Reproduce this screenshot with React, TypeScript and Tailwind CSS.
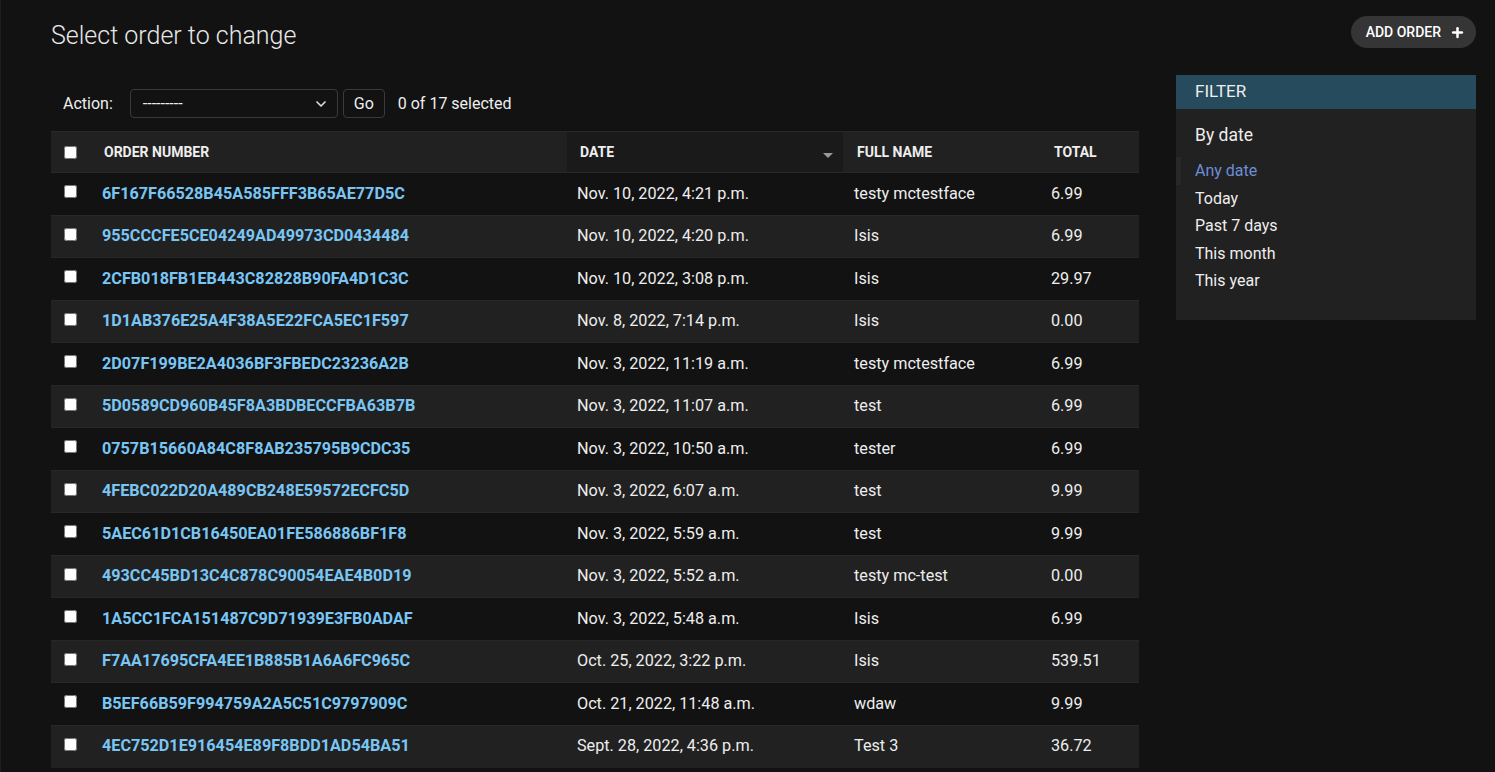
import { ChevronDown, Plus } from 'lucide-react';

interface Order {
  number: string;
  date: string;
  name: string;
  total: string;
}

const orders: Order[] = [
  { number: '6F167F66528B45A585FFF3B65AE77D5C', date: 'Nov. 10, 2022, 4:21 p.m.', name: 'testy mctestface', total: '6.99' },
  { number: '955CCCFE5CE04249AD49973CD0434484', date: 'Nov. 10, 2022, 4:20 p.m.', name: 'Isis', total: '6.99' },
  { number: '2CFB018FB1EB443C82828B90FA4D1C3C', date: 'Nov. 10, 2022, 3:08 p.m.', name: 'Isis', total: '29.97' },
  { number: '1D1AB376E25A4F38A5E22FCA5EC1F597', date: 'Nov. 8, 2022, 7:14 p.m.', name: 'Isis', total: '0.00' },
  { number: '2D07F199BE2A4036BF3FBEDC23236A2B', date: 'Nov. 3, 2022, 11:19 a.m.', name: 'testy mctestface', total: '6.99' },
  { number: '5D0589CD960B45F8A3BDBECCFBA63B7B', date: 'Nov. 3, 2022, 11:07 a.m.', name: 'test', total: '6.99' },
  { number: '0757B15660A84C8F8AB235795B9CDC35', date: 'Nov. 3, 2022, 10:50 a.m.', name: 'tester', total: '6.99' },
  { number: '4FEBC022D20A489CB248E59572ECFC5D', date: 'Nov. 3, 2022, 6:07 a.m.', name: 'test', total: '9.99' },
  { number: '5AEC61D1CB16450EA01FE586886BF1F8', date: 'Nov. 3, 2022, 5:59 a.m.', name: 'test', total: '9.99' },
  { number: '493CC45BD13C4C878C90054EAE4B0D19', date: 'Nov. 3, 2022, 5:52 a.m.', name: 'testy mc-test', total: '0.00' },
  { number: '1A5CC1FCA151487C9D71939E3FB0ADAF', date: 'Nov. 3, 2022, 5:48 a.m.', name: 'Isis', total: '6.99' },
  { number: 'F7AA17695CFA4EE1B885B1A6A6FC965C', date: 'Oct. 25, 2022, 3:22 p.m.', name: 'Isis', total: '539.51' },
  { number: 'B5EF66B59F994759A2A5C51C9797909C', date: 'Oct. 21, 2022, 11:48 a.m.', name: 'wdaw', total: '9.99' },
  { number: '4EC752D1E916454E89F8BDD1AD54BA51', date: 'Sept. 28, 2022, 4:36 p.m.', name: 'Test 3', total: '36.72' },
];

const dateFilters = ['Any date', 'Today', 'Past 7 days', 'This month', 'This year'];

function ActionBar() {
  return (
    <div className="flex items-center h-[29px] pl-3 text-[16px] text-[#eeeeee]">
      <span>Action:</span>
      <div className="ml-[17px] flex items-center justify-between w-[208px] h-[29px] border border-[#3a3a3a] rounded-[4px] pl-3 pr-2 text-[16px]">
        <span>---------</span>
        <ChevronDown size={16} strokeWidth={2.5} className="text-[#dddddd]" />
      </div>
      <button className="ml-[5px] w-[42px] h-[29px] border border-[#3a3a3a] rounded-[4px] text-[16px]">Go</button>
      <span className="ml-[13px]">0 of 17 selected</span>
    </div>
  );
}

function OrderTable() {
  return (
    <table className="w-[1088px] table-fixed border-collapse mt-[13px]">
      <colgroup>
        <col className="w-[39px]" />
        <col className="w-[477px]" />
        <col className="w-[276px]" />
        <col className="w-[197px]" />
        <col className="w-[99px]" />
      </colgroup>
      <thead>
        <tr className="h-[41px] text-left text-[14px] font-bold uppercase text-[#eeeeee] border-t border-[#272727]">
          <th className="bg-[#212121] pl-[13px]">
            <input type="checkbox" className="block w-[13px] h-[13px]" />
          </th>
          <th className="bg-[#212121] pl-[14px]">Order number</th>
          <th className="bg-[#1a1a1a] pl-[13px]">
            <div className="flex items-center justify-between pr-[10px]">
              <span>Date</span>
              <span className="w-0 h-0 border-l-[5px] border-r-[5px] border-t-[5px] border-l-transparent border-r-transparent border-t-[#999999] mt-[6px]" />
            </div>
          </th>
          <th className="bg-[#212121] pl-[14px]">Full name</th>
          <th className="bg-[#212121] pl-[14px]">Total</th>
        </tr>
      </thead>
      <tbody>
        {orders.map((order, i) => (
          <tr
            key={order.number}
            className={`h-[42.5px] text-[16.2px] text-[#eeeeee] border-t border-[#272727] ${i % 2 === 1 ? 'bg-[#212121]' : 'bg-[#121212]'}`}
          >
            <td className="pl-[13px]">
              <input type="checkbox" className="block w-[13px] h-[13px] -mt-[4px]" />
            </td>
            <td className="pl-[12px]">
              <a href="#" className="font-bold text-[#79c6f5]">{order.number}</a>
            </td>
            <td className="pl-[10px]">{order.date}</td>
            <td className="pl-[11px]">{order.name}</td>
            <td className="pl-[11px]">{order.total}</td>
          </tr>
        ))}
      </tbody>
    </table>
  );
}

function FilterPanel() {
  return (
    <div className="w-[300px] bg-[#212121] text-[#eeeeee]">
      <div className="h-[34px] bg-[#264b5d] pl-[19px] flex items-center text-[17px]">FILTER</div>
      <div className="pt-[14px] pb-[25px]">
        <h3 className="pl-[19px] text-[17.5px] leading-[24px]">By date</h3>
        <ul className="mt-[10px] text-[16px] leading-[27.5px]">
          {dateFilters.map((f, i) => (
            <li
              key={f}
              className={i === 0 ? 'border-l-[5px] border-[#282828] pl-[14px] text-[#6b8fd6]' : 'pl-[19px]'}
            >
              {f}
            </li>
          ))}
        </ul>
      </div>
    </div>
  );
}

export default function App() {
  return (
    <div
      className="min-h-screen bg-[#121212] border-l border-[#1e1e1e] pl-[50px] pr-[19px] pb-10"
      style={{ fontFamily: 'Roboto, "Liberation Sans", sans-serif' }}
    >
      <div className="flex items-start justify-between pt-4">
        <h1 className="mt-[4px] text-[25px] leading-[32px] font-light text-[#e8e8e8]">Select order to change</h1>
        <a
          href="#"
          className="flex items-center gap-[9px] h-8 pl-[15px] pr-[11px] rounded-full bg-[#353535] text-[14px] font-medium uppercase text-white"
        >
          Add order
          <Plus size={15} strokeWidth={4} />
        </a>
      </div>
      <div className="flex items-start justify-between mt-[23px]">
        <div className="pt-[14px]">
          <ActionBar />
          <OrderTable />
        </div>
        <FilterPanel />
      </div>
    </div>
  );
}
